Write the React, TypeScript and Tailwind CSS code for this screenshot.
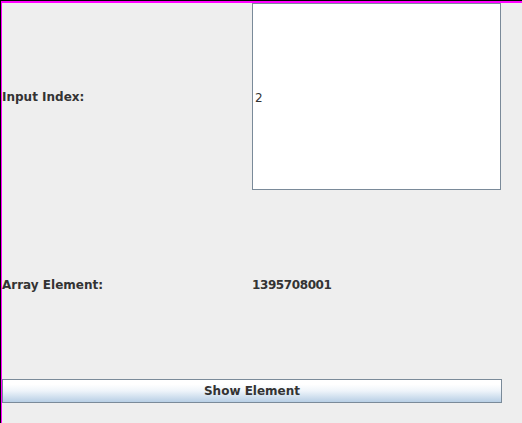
export default function App() {
  return (
    <div className="w-[522px] h-[423px] bg-black pt-px pl-px overflow-hidden">
      <div className="w-full h-full bg-[#ff00ff] pt-[2px] pl-px">
        <div
          className="w-full h-full bg-[#eeeeee] text-[12px] text-[#333333]"
          style={{ fontFamily: '"DejaVu Sans", sans-serif' }}
        >
          <div className="flex h-[188px] items-center">
            <div className="w-[250px] font-bold">Input Index:</div>
            <div className="self-start w-[249px] h-[187px] border border-[#7a8a99] bg-white flex items-center pl-[2px] pt-[3px] text-[#333333]">
              2
            </div>
          </div>
          <div className="flex h-[188px] items-center">
            <div className="w-[250px] font-bold">Array Element:</div>
            <div className="font-bold tracking-[-0.4px]">1395708001</div>
          </div>
          <button className="w-[500px] h-[24px] border border-[#7a8a99] bg-gradient-to-b from-[#ffffff] from-20% via-[#eef4fa] to-[#b8cfe5] font-bold text-[#333333] flex items-center justify-center">
            Show Element
          </button>
        </div>
      </div>
    </div>
  );
}
